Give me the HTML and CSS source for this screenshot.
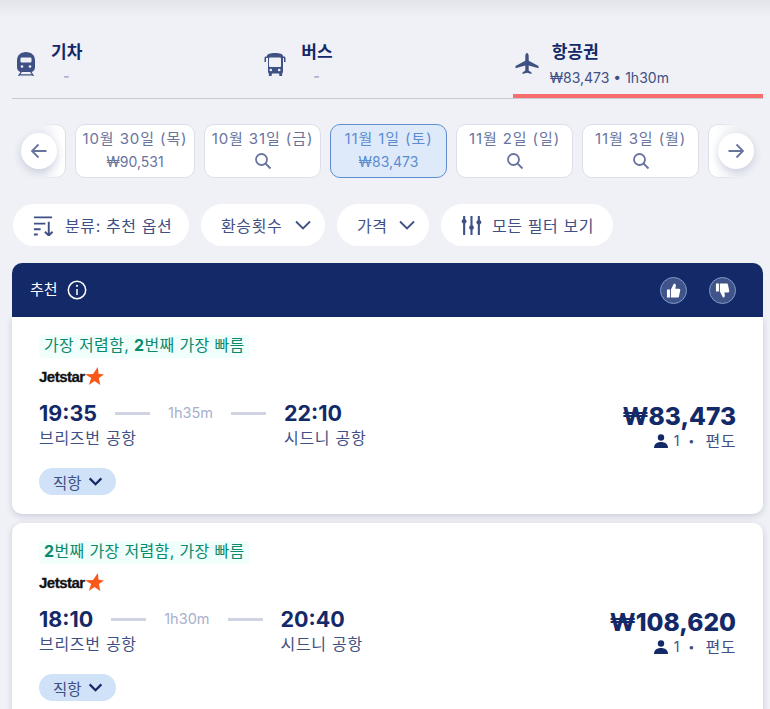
FILE: index.html
```html
<!DOCTYPE html>
<html lang="ko">
<head>
    <meta charset="UTF-8">
    <title>항공권 검색 결과</title>
    <link rel="stylesheet" href="styles.css">
</head>
<body>

    <div class="tabs">
        <div class="tab">
            <svg class="tab-icon" viewBox="0 0 24 24"><path d="M12 0C6.500 0 3 3.500 3 8.500v6.500c0 3 2 5 4.500 5h9c2.500 0 4.500-2 4.500-5V8.500C21 3.500 17.500 0 12 0z"/><rect class="icon-cut" x="6.500" y="5.500" width="11" height="5" rx="1.200"/><circle class="icon-cut" cx="8" cy="14.500" r="1.300"/><circle class="icon-cut" cx="16" cy="14.500" r="1.300"/><path class="icon-line" d="M7.500 19.500l-3 4.500M16.500 19.500l3 4.500M5 22.800h14"/></svg>
            <div class="tab-text">
                <div class="tab-title">기차</div>
                <div class="tab-sub dash">-</div>
            </div>
        </div>
        <div class="tab">
            <svg class="tab-icon" viewBox="0 0 24 24"><path d="M3 4c0-2 3-3 8-3s8 1 8 3v.500h1c.8 0 1.500.7 1.500 1.500v4H20V6h-1v14c0 .6-.3 1-.8 1.200V23c0 .6-.4 1-1 1h-1c-.6 0-1-.4-1-1v-1.500H7.800V23c0 .6-.4 1-1 1h-1c-.6 0-1-.4-1-1v-1.800C4.300 21 4 20.600 4 20V6H2v4H.5V6c0-.8.7-1.500 1.500-1.500h1z"/><rect class="icon-cut" x="5" y="5.500" width="12" height="9.500" rx="1"/><circle class="icon-cut" cx="6.800" cy="18" r="1.300"/><circle class="icon-cut" cx="15.200" cy="18" r="1.300"/></svg>
            <div class="tab-text">
                <div class="tab-title">버스</div>
                <div class="tab-sub dash">-</div>
            </div>
        </div>
        <div class="tab tab-active">
            <svg class="tab-icon" viewBox="0 0 24 24"><path d="M12 1c1 0 1.700 1.500 1.700 3v4.800L23.500 14v2.200l-9.800-2.800v5.100l2.800 2.100V22L12 20.800 7.500 22v-1.400l2.800-2.100v-5.100L.5 16.200V14l9.800-5.200V4c0-1.500.7-3 1.700-3z"/></svg>
            <div class="tab-text">
                <div class="tab-title">항공권</div>
                <div class="tab-sub">₩83,473 • 1h30m</div>
            </div>
        </div>
    </div>

    <div class="dates">
        <div class="date-strip">
            <div class="date date-edge-left"></div>
            <div class="date date-wide">
                <span class="date-day">10월 30일 (목)</span>
                <span>₩90,531</span>
            </div>
            <div class="date">
                <span class="date-day">10월 31일 (금)</span>
                <svg class="search" viewBox="0 0 18 18"><circle cx="7.500" cy="7.500" r="5.500"/><path d="M11.500 11.500L16.500 16.500"/></svg>
            </div>
            <div class="date date-active">
                <span class="date-day">11월 1일 (토)</span>
                <span>₩83,473</span>
            </div>
            <div class="date">
                <span class="date-day">11월 2일 (일)</span>
                <svg class="search" viewBox="0 0 18 18"><circle cx="7.500" cy="7.500" r="5.500"/><path d="M11.500 11.500L16.500 16.500"/></svg>
            </div>
            <div class="date">
                <span class="date-day">11월 3일 (월)</span>
                <svg class="search" viewBox="0 0 18 18"><circle cx="7.500" cy="7.500" r="5.500"/><path d="M11.500 11.500L16.500 16.500"/></svg>
            </div>
            <div class="date"></div>
        </div>
        <div class="fade fade-left"></div>
        <div class="fade fade-right"></div>
        <button class="arrow arrow-left">
            <svg viewBox="0 0 20 20"><path d="M17.500 10H3M9.500 3.500L3 10l6.500 6.500"/></svg>
        </button>
        <button class="arrow arrow-right">
            <svg viewBox="0 0 20 20"><path d="M2.500 10H17M10.500 3.500L17 10l-6.500 6.500"/></svg>
        </button>
    </div>

    <div class="filters">
        <div class="chip chip-sort">
            <svg class="chip-icon" viewBox="0 0 22 22"><path d="M1 2.500h19M1 9h12M1 15h7M1 20.500h4M16.500 7v14M12.500 17.500l4 4 4-4"/></svg>
            <span>분류: 추천 옵션</span>
        </div>
        <div class="chip chip-stops">
            <span>환승횟수</span>
            <svg class="chevron" viewBox="0 0 16 10"><path d="M1 1.500l7 7 7-7"/></svg>
        </div>
        <div class="chip chip-price">
            <span>가격</span>
            <svg class="chevron" viewBox="0 0 16 10"><path d="M1 1.500l7 7 7-7"/></svg>
        </div>
        <div class="chip chip-all">
            <svg class="chip-icon" viewBox="0 0 20 20"><path d="M3 1v18M10 1v18M17 1v18"/><circle class="knob" cx="3" cy="6" r="2.300"/><circle class="knob" cx="10" cy="12" r="2.300"/><circle class="knob" cx="17" cy="7" r="2.300"/></svg>
            <span>모든 필터 보기</span>
        </div>
    </div>

    <div class="results">
        <div class="result-group">
            <div class="group-head">
                <div class="group-title">
                    <span>추천</span>
                    <svg class="info" viewBox="0 0 20 20"><circle cx="10" cy="10" r="8.700"/><path d="M10 9v6"/><circle class="dot" cx="10" cy="5.800" r="1.100"/></svg>
                </div>
                <div class="votes">
                    <div class="vote"><svg viewBox="0 0 16 16"><path d="M1 7h3.200v8.500H1zM5.200 7L8.500.5c1.300 0 2 1 2 2.200L10 6h4c.9 0 1.400.8 1.200 1.600l-1.400 6.700c-.2.700-.7 1.200-1.400 1.200H5.200z"/></svg></div>
                    <div class="vote"><svg viewBox="0 0 16 16"><path d="M1 .5h3.200V9H1zM5.200 9l3.300 6.500c1.300 0 2-1 2-2.200L10 10h4c.9 0 1.400-.8 1.200-1.600L13.800 1.700C13.600 1 13.100.5 12.400.5H5.200z"/></svg></div>
                </div>
            </div>
            <div class="result result-first">
                <div class="result-info">
                    <div class="badge">가장 저렴함, <b>2</b>번째 가장 빠름</div>
                    <div class="airline">
                        <span class="airline-name">Jetstar</span>
                        <svg class="airline-star" viewBox="0 0 20 20"><path d="M13.500 0l.8 7 5.700 1-5.300 3.700L16 19l-6-4.200L4 19l2.500-7.300L0 7.500l8.500-.2z"/></svg>
                    </div>
                    <div class="route">
                        <div class="stop stop-from">
                            <div class="time">19:35</div>
                            <div class="place">브리즈번 공항</div>
                        </div>
                        <div class="leg"><i></i><span>1h35m</span><i></i></div>
                        <div class="stop">
                            <div class="time">22:10</div>
                            <div class="place">시드니 공항</div>
                        </div>
                    </div>
                    <div class="direct">직항 <svg viewBox="0 0 16 10"><path d="M1.500 1.500L8 8l6.500-6.500"/></svg></div>
                </div>
                <div class="fare">
                    <div class="price">₩83,473</div>
                    <div class="fare-note">
                        <svg class="person" viewBox="0 0 14 14"><circle cx="7" cy="3.500" r="3.200"/><path d="M0 14c0-4 3-6 7-6s7 2 7 6z"/></svg>
                        <span>1</span><span class="sep">•</span><span class="fare-type">편도</span>
                    </div>
                </div>
            </div>
        </div>

        <div class="result">
            <div class="result-info">
                <div class="badge"><b>2</b>번째 가장 저렴함, 가장 빠름</div>
                <div class="airline">
                    <span class="airline-name">Jetstar</span>
                    <svg class="airline-star" viewBox="0 0 20 20"><path d="M13.500 0l.8 7 5.700 1-5.300 3.700L16 19l-6-4.200L4 19l2.500-7.300L0 7.500l8.500-.2z"/></svg>
                </div>
                <div class="route">
                    <div class="stop stop-from">
                        <div class="time">18:10</div>
                        <div class="place">브리즈번 공항</div>
                    </div>
                    <div class="leg"><i></i><span>1h30m</span><i></i></div>
                    <div class="stop">
                        <div class="time">20:40</div>
                        <div class="place">시드니 공항</div>
                    </div>
                </div>
                <div class="direct">직항 <svg viewBox="0 0 16 10"><path d="M1.500 1.500L8 8l6.500-6.500"/></svg></div>
            </div>
            <div class="fare">
                <div class="price">₩108,620</div>
                <div class="fare-note">
                    <svg class="person" viewBox="0 0 14 14"><circle cx="7" cy="3.500" r="3.200"/><path d="M0 14c0-4 3-6 7-6s7 2 7 6z"/></svg>
                    <span>1</span><span class="sep">•</span><span class="fare-type">편도</span>
                </div>
            </div>
        </div>
    </div>

</body>
</html>
```

FILE: styles.css
```css
* {
    box-sizing: border-box;
}
html, body {
    height: 709px;
    overflow: hidden;
}
body {
    margin: 0;
    padding: 0 7px 0 12px;
    font-family: Inter, "Noto Sans CJK KR", sans-serif;
    color: #132968;
    background: linear-gradient(#e3e4e9, #f0f1f6 18px);
    background-color: #f0f1f6;
}

/* tabs */
.tabs {
    display: flex;
    height: 99px;
    padding-top: 39px;
    border-bottom: 1px solid #c9cacf;
}
.tab {
    flex: 1;
    display: flex;
    align-items: flex-start;
    gap: 11px;
    padding-left: 2px;
    height: 59px;
}
.tab-active {
    border-bottom: 4px solid #f76c6c;
}
.tab-icon {
    width: 24px;
    height: 24px;
    margin-top: 13px;
    fill: #3f5084;
    flex: none;
}
.icon-cut {
    fill: #f0f1f6;
}
.icon-line {
    fill: none;
    stroke: #3f5084;
    stroke-width: 1.300;
}
.tab-text {
    display: flex;
    flex-direction: column;
    padding-top: 1px;
}
.tab-title {
    font-size: 17px;
    line-height: 24px;
    font-weight: 700;
    padding-left: 2px;
}
.tab-sub {
    margin-top: 4px;
    font-size: 14px;
    line-height: 20px;
    color: #3f5084;
}
.dash {
    margin-top: 2px;
    padding-left: 14px;
    color: #a8b0cb;
    font-weight: 700;
}

/* date strip */
.dates {
    position: relative;
    height: 54px;
    margin: 25px 9px 0;
}
.date-strip {
    display: flex;
    gap: 9px;
    height: 54px;
    overflow: hidden;
}
.date {
    flex: none;
    width: 117px;
    height: 54px;
    display: flex;
    flex-direction: column;
    align-items: center;
    gap: 4px;
    padding-top: 4px;
    font-size: 14px;
    line-height: 19px;
    color: #68749e;
    background: #fff;
    border: 1px solid #dcdfe9;
    border-radius: 10px;
}
.date-day {
    font-size: 15px;
    letter-spacing: 0.9px;
    white-space: nowrap;
}
.date-edge-left {
    margin-left: -72px;
}
.date-wide {
    width: 120px;
}
.date-active {
    color: #5b8dd0;
    background: #deeafa;
    border-color: #5f8fd0;
}
.search {
    width: 18px;
    height: 18px;
    fill: none;
    stroke: #68749e;
    stroke-width: 1.800;
}
.fade {
    position: absolute;
    top: 0;
    width: 40px;
    height: 54px;
}
.fade-left {
    left: 0;
    background: linear-gradient(to right, #f0f1f6 55%, rgba(240, 241, 246, 0));
}
.fade-right {
    right: 0;
    background: linear-gradient(to left, #f0f1f6 40%, rgba(240, 241, 246, 0));
}
.arrow {
    position: absolute;
    top: 9px;
    width: 36px;
    height: 36px;
    padding: 0;
    border: 0;
    border-radius: 50%;
    background: #fff;
    box-shadow: 0 3px 8px rgba(19, 41, 104, 0.18);
    display: flex;
    align-items: center;
    justify-content: center;
}
.arrow-left {
    left: 0;
}
.arrow-right {
    right: 0;
}
.arrow svg {
    width: 20px;
    height: 20px;
    fill: none;
    stroke: #68749e;
    stroke-width: 1.800;
}

/* filters */
.filters {
    display: flex;
    gap: 12px;
    margin: 26px 0 0 1px;
}
.chip {
    height: 42px;
    display: flex;
    align-items: center;
    background: #fff;
    border-radius: 21px;
    font-size: 16px;
    letter-spacing: 0.6px;
    color: #3f5084;
    white-space: nowrap;
}
.chip-sort {
    width: 176px;
    padding-left: 20px;
    gap: 11px;
}
.chip-stops {
    width: 124px;
    padding-left: 20px;
    gap: 13px;
}
.chip-price {
    width: 92px;
    padding-left: 20px;
    gap: 11px;
}
.chip-all {
    width: 172px;
    padding-left: 20px;
    gap: 10px;
}
.chip-icon {
    width: 21px;
    height: 21px;
    fill: none;
    stroke: #3f5084;
    stroke-width: 2;
}
.knob {
    fill: #3f5084;
    stroke: none;
}
.chevron {
    width: 16px;
    height: 10px;
    fill: none;
    stroke: #3f5084;
    stroke-width: 1.800;
}

/* results */
.results {
    margin-top: 17px;
    display: flex;
    flex-direction: column;
    gap: 9px;
}
.result-group {
    display: flex;
    flex-direction: column;
}
.group-head {
    height: 54px;
    display: flex;
    align-items: center;
    justify-content: space-between;
    padding: 0 27px 0 18px;
    color: #fff;
    background: #132968;
    border-radius: 10px 10px 0 0;
}
.group-title {
    display: flex;
    align-items: center;
    gap: 9px;
    font-size: 15px;
}
.group-title span {
    margin-top: -4px;
}
.info {
    width: 20px;
    height: 20px;
    fill: none;
    stroke: #fff;
    stroke-width: 1.500;
}
.info .dot {
    fill: #fff;
    stroke: none;
}
.votes {
    display: flex;
    gap: 22px;
}
.vote {
    width: 27px;
    height: 27px;
    display: flex;
    align-items: center;
    justify-content: center;
    background: #40548a;
    border: 1px solid #7d9ccc;
    border-radius: 50%;
}
.vote svg {
    width: 15px;
    height: 15px;
    fill: #fff;
}
.result {
    display: flex;
    justify-content: space-between;
    height: 197px;
    padding: 18px 27px 0;
    background: #fff;
    border-radius: 10px;
    box-shadow: 0 2px 6px rgba(19, 41, 104, 0.18);
}
.result-first {
    border-radius: 0 0 10px 10px;
}
.result-info {
    display: flex;
    flex-direction: column;
    align-items: flex-start;
}
.badge {
    height: 23px;
    padding: 0 5px;
    font-size: 16px;
    line-height: 21px;
    letter-spacing: 0.35px;
    color: #0a8a6c;
    background: #f0fefc;
    border-radius: 5px;
}
.airline {
    display: flex;
    align-items: center;
    height: 18px;
    margin-top: 9px;
}
.airline-name {
    font-family: "Liberation Sans", sans-serif;
    font-size: 15px;
    font-weight: 700;
    letter-spacing: -0.5px;
    color: #111;
    -webkit-text-stroke: 0.3px #111;
}
.airline-star {
    width: 19px;
    height: 19px;
    fill: #f9581a;
}
.route {
    display: flex;
    margin-top: 14px;
}
.stop {
    white-space: nowrap;
}
.stop-from {
    margin-right: 18px;
}
.stop-from .place {
    width: 0;
}
.time {
    font-size: 21.500px;
    line-height: 28px;
    font-weight: 700;
}
.place {
    font-size: 16px;
    line-height: 22px;
    letter-spacing: 0.7px;
    color: #3f5084;
}
.leg {
    display: flex;
    align-items: flex-start;
    gap: 18px;
    margin-right: 18px;
    font-size: 14.500px;
    line-height: 28px;
    color: #a8b0cb;
}
.leg i {
    width: 35px;
    height: 3px;
    margin-top: 13px;
    background: #d0d4e2;
}
.direct {
    display: flex;
    align-items: center;
    gap: 6px;
    height: 27px;
    margin-top: 19px;
    padding: 0 13px 0 14px;
    font-size: 15.500px;
    color: #3f5084;
    background: #cfe2f7;
    border-radius: 14px;
}
.direct svg {
    width: 15px;
    height: 9px;
    fill: none;
    stroke: #132968;
    stroke-width: 2.500;
}
.fare {
    display: flex;
    flex-direction: column;
    align-items: flex-end;
    margin-top: 67px;
}
.price {
    font-size: 24.500px;
    line-height: 28px;
    font-weight: 800;
}
.fare-note {
    display: flex;
    align-items: center;
    font-size: 14px;
    line-height: 20px;
    margin-top: 1px;
    color: #3f5084;
}
.fare-type {
    font-size: 16px;
    letter-spacing: 0.5px;
}
.person {
    width: 14px;
    height: 14px;
    margin-right: 6px;
    fill: #132968;
}
.sep {
    margin: 0 11px 0 9px;
    font-size: 11px;
}
```
